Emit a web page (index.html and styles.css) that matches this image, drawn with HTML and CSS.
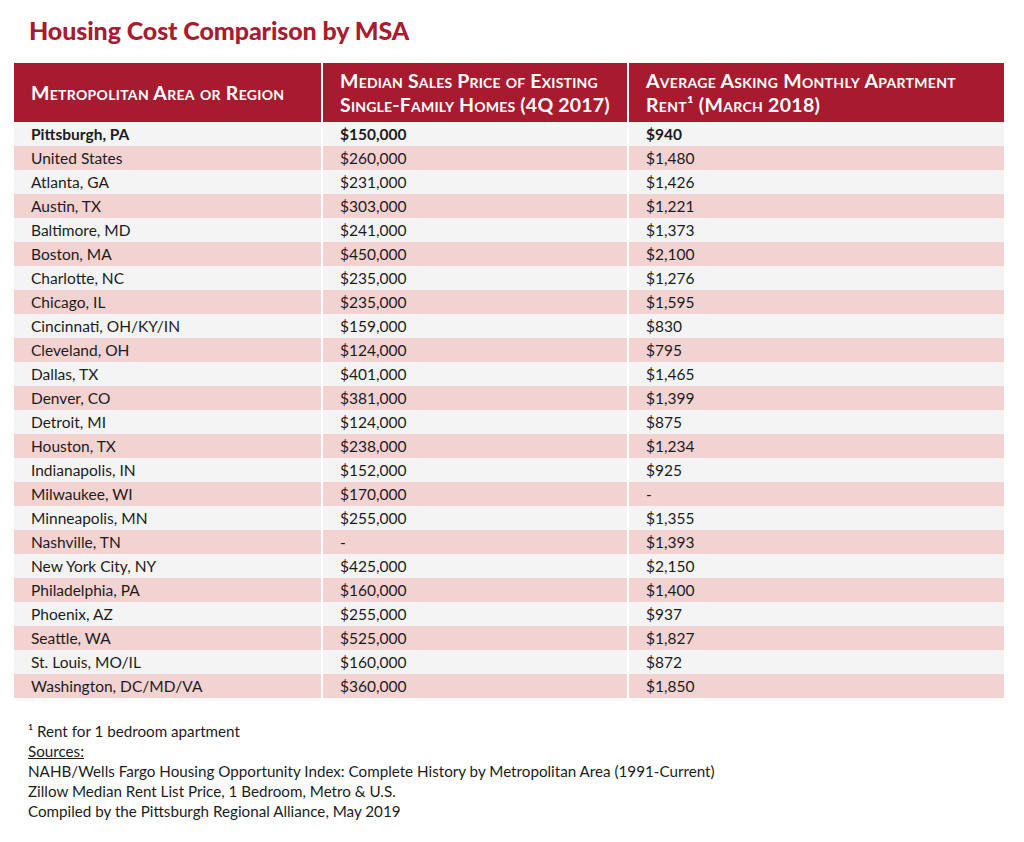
FILE: index.html
```html
<!DOCTYPE html>
<html>
<head>
<meta charset="utf-8">
<link rel="stylesheet" href="styles.css">
</head>
<body>
<div class="page">
  <h1 class="title">Housing Cost Comparison by MSA</h1>
  <table class="tbl">
    <colgroup>
      <col class="c1"><col class="c2"><col class="c3">
    </colgroup>
    <thead>
      <tr>
        <th>Metropolitan Area or Region</th>
        <th class="tight">Median Sales Price of Existing Single-Family Homes (4Q&nbsp;2017)</th>
        <th>Average Asking Monthly Apartment Rent¹ (March 2018)</th>
      </tr>
    </thead>
    <tbody>
      <tr class="bold"><td>Pittsburgh, PA</td><td>$150,000</td><td>$940</td></tr>
      <tr><td>United States</td><td>$260,000</td><td>$1,480</td></tr>
      <tr><td>Atlanta, GA</td><td>$231,000</td><td>$1,426</td></tr>
      <tr><td>Austin, TX</td><td>$303,000</td><td>$1,221</td></tr>
      <tr><td>Baltimore, MD</td><td>$241,000</td><td>$1,373</td></tr>
      <tr><td>Boston, MA</td><td>$450,000</td><td>$2,100</td></tr>
      <tr><td>Charlotte, NC</td><td>$235,000</td><td>$1,276</td></tr>
      <tr><td>Chicago, IL</td><td>$235,000</td><td>$1,595</td></tr>
      <tr><td>Cincinnati, OH/KY/IN</td><td>$159,000</td><td>$830</td></tr>
      <tr><td>Cleveland, OH</td><td>$124,000</td><td>$795</td></tr>
      <tr><td>Dallas, TX</td><td>$401,000</td><td>$1,465</td></tr>
      <tr><td>Denver, CO</td><td>$381,000</td><td>$1,399</td></tr>
      <tr><td>Detroit, MI</td><td>$124,000</td><td>$875</td></tr>
      <tr><td>Houston, TX</td><td>$238,000</td><td>$1,234</td></tr>
      <tr><td>Indianapolis, IN</td><td>$152,000</td><td>$925</td></tr>
      <tr><td>Milwaukee, WI</td><td>$170,000</td><td>-</td></tr>
      <tr><td>Minneapolis, MN</td><td>$255,000</td><td>$1,355</td></tr>
      <tr><td>Nashville, TN</td><td>-</td><td>$1,393</td></tr>
      <tr><td>New York City, NY</td><td>$425,000</td><td>$2,150</td></tr>
      <tr><td>Philadelphia, PA</td><td>$160,000</td><td>$1,400</td></tr>
      <tr><td>Phoenix, AZ</td><td>$255,000</td><td>$937</td></tr>
      <tr><td>Seattle, WA</td><td>$525,000</td><td>$1,827</td></tr>
      <tr><td>St. Louis, MO/IL</td><td>$160,000</td><td>$872</td></tr>
      <tr><td>Washington, DC/MD/VA</td><td>$360,000</td><td>$1,850</td></tr>
    </tbody>
  </table>
  <div class="notes">
    <p>¹ Rent for 1 bedroom apartment</p>
    <p class="u">Sources:</p>
    <p>NAHB/Wells Fargo Housing Opportunity Index: Complete History by Metropolitan Area (1991-Current)</p>
    <p>Zillow Median Rent List Price, 1 Bedroom, Metro &amp; U.S.</p>
    <p>Compiled by the Pittsburgh Regional Alliance, May 2019</p>
  </div>
</div>
</body>
</html>
```
FILE: styles.css
```css
* { box-sizing: border-box; }
html, body { margin: 0; padding: 0; background: #fff; }
body { font-family: Lato, "Open Sans", sans-serif; color: #1c1c1c; }
.page { padding: 15px 20px 0 14px; width: 1024px; }
.title {
  margin: 0 0 0 15px;
  font-size: 25px;
  line-height: 30px;
  font-weight: 900;
  color: #a81b30;
  letter-spacing: -0.1px;
}
.tbl {
  margin-top: 18px;
  width: 990px;
  border-collapse: collapse;
  table-layout: fixed;
}
.c1 { width: 308px; }
.c2 { width: 306px; }
.c3 { width: 376px; }
.tbl th {
  background: #a81b2f;
  color: #fff;
  font-variant: small-caps;
  font-weight: 700;
  font-size: 19.5px;
  line-height: 24px;
  text-align: left;
  padding: 6px 4px 5px 17px;
  height: 59px;
  border-left: 2px solid #fff;
  letter-spacing: 0.3px;
}
.tbl th.tight { letter-spacing: 0.2px; padding-right: 2px; }
.tbl th:first-child, .tbl td:first-child { border-left: none; }
.tbl td {
  height: 24px;
  padding: 0 17px;
  font-size: 15.5px;
  line-height: 24px;
  border-left: 2px solid #fff;
  white-space: nowrap;
}
.tbl tbody tr:nth-child(odd) td { background: #f4f4f4; }
.tbl tbody tr:nth-child(even) td { background: #f3d2d2; }
.tbl tr.bold td { font-weight: 700; }
.notes { margin: 23px 0 0 14px; font-size: 15.2px; line-height: 20px; color: #1c1c1c; }
.notes p { margin: 0; }
.notes .u { text-decoration: underline; }
```
